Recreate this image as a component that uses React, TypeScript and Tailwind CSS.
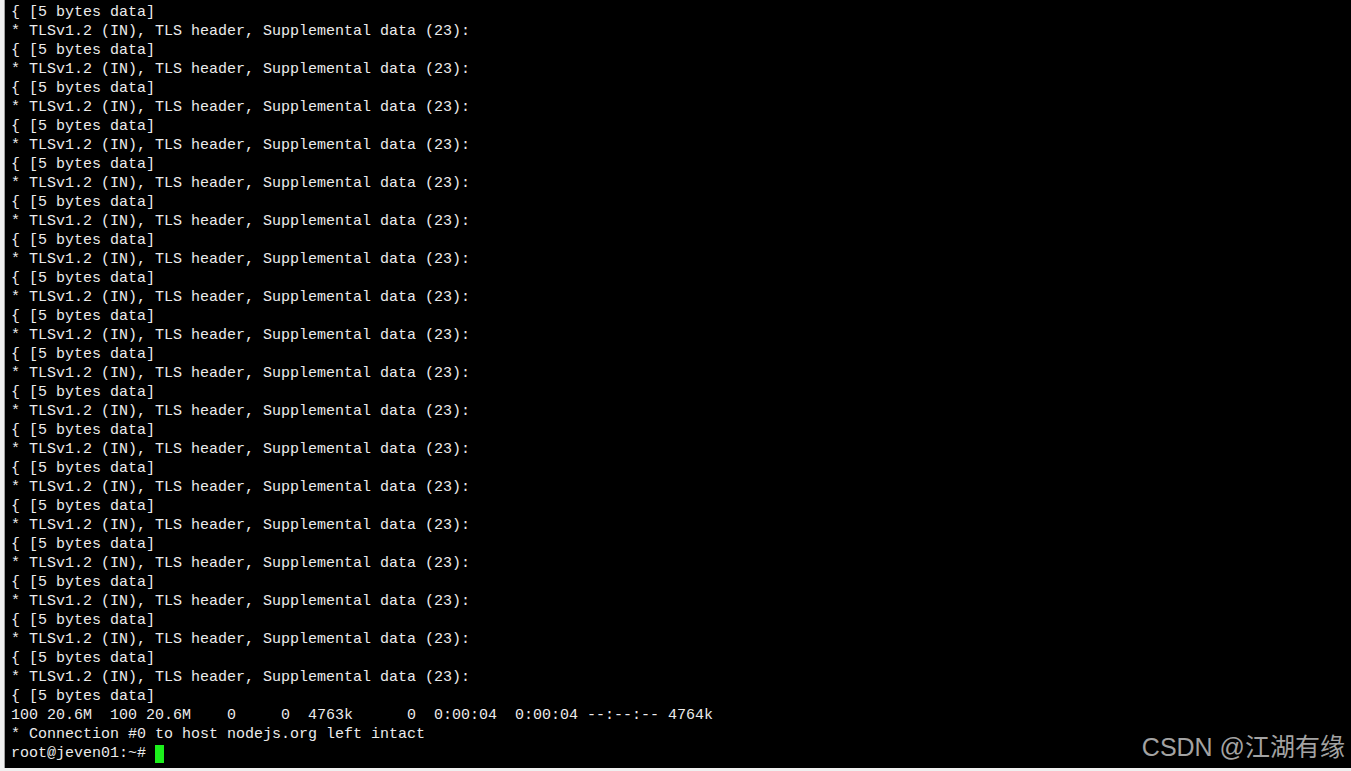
import React from 'react'

const lines: string[] = []
for (let i = 0; i < 18; i++) {
  lines.push('{ [5 bytes data]')
  lines.push('* TLSv1.2 (IN), TLS header, Supplemental data (23):')
}
lines.push('{ [5 bytes data]')
lines.push('100 20.6M  100 20.6M    0     0  4763k      0  0:00:04  0:00:04 --:--:-- 4764k')
lines.push('* Connection #0 to host nodejs.org left intact')

export default function App(){
  return (
    <div className="w-[1351px] h-[771px] bg-[#f0f0f0] flex flex-col overflow-hidden relative">
      <div className="flex-1 ml-[4px] mb-[3px] border-l border-[#a0a0a0] bg-black pl-[6px] pt-[3px] text-[#ececec] text-[15px] leading-[19px] whitespace-pre" style={{ fontFamily: '"Liberation Mono", "DejaVu Sans Mono", monospace' }}>
        {lines.map((l, i) => <div key={i}>{l}</div>)}
        <div className="flex items-center">
          <span>root@jeven01:~# </span>
          <span className="inline-block w-[9px] h-[18px] bg-[#1cf01c]" />
        </div>
      </div>
      <div className="absolute right-[6px] bottom-[10px] text-[#a3a3a3] text-[25px] leading-[28px]" style={{ fontFamily: 'Arial, "Liberation Sans", "Noto Sans CJK SC", sans-serif' }}>
        CSDN @江湖有缘
      </div>
    </div>
  )
}
